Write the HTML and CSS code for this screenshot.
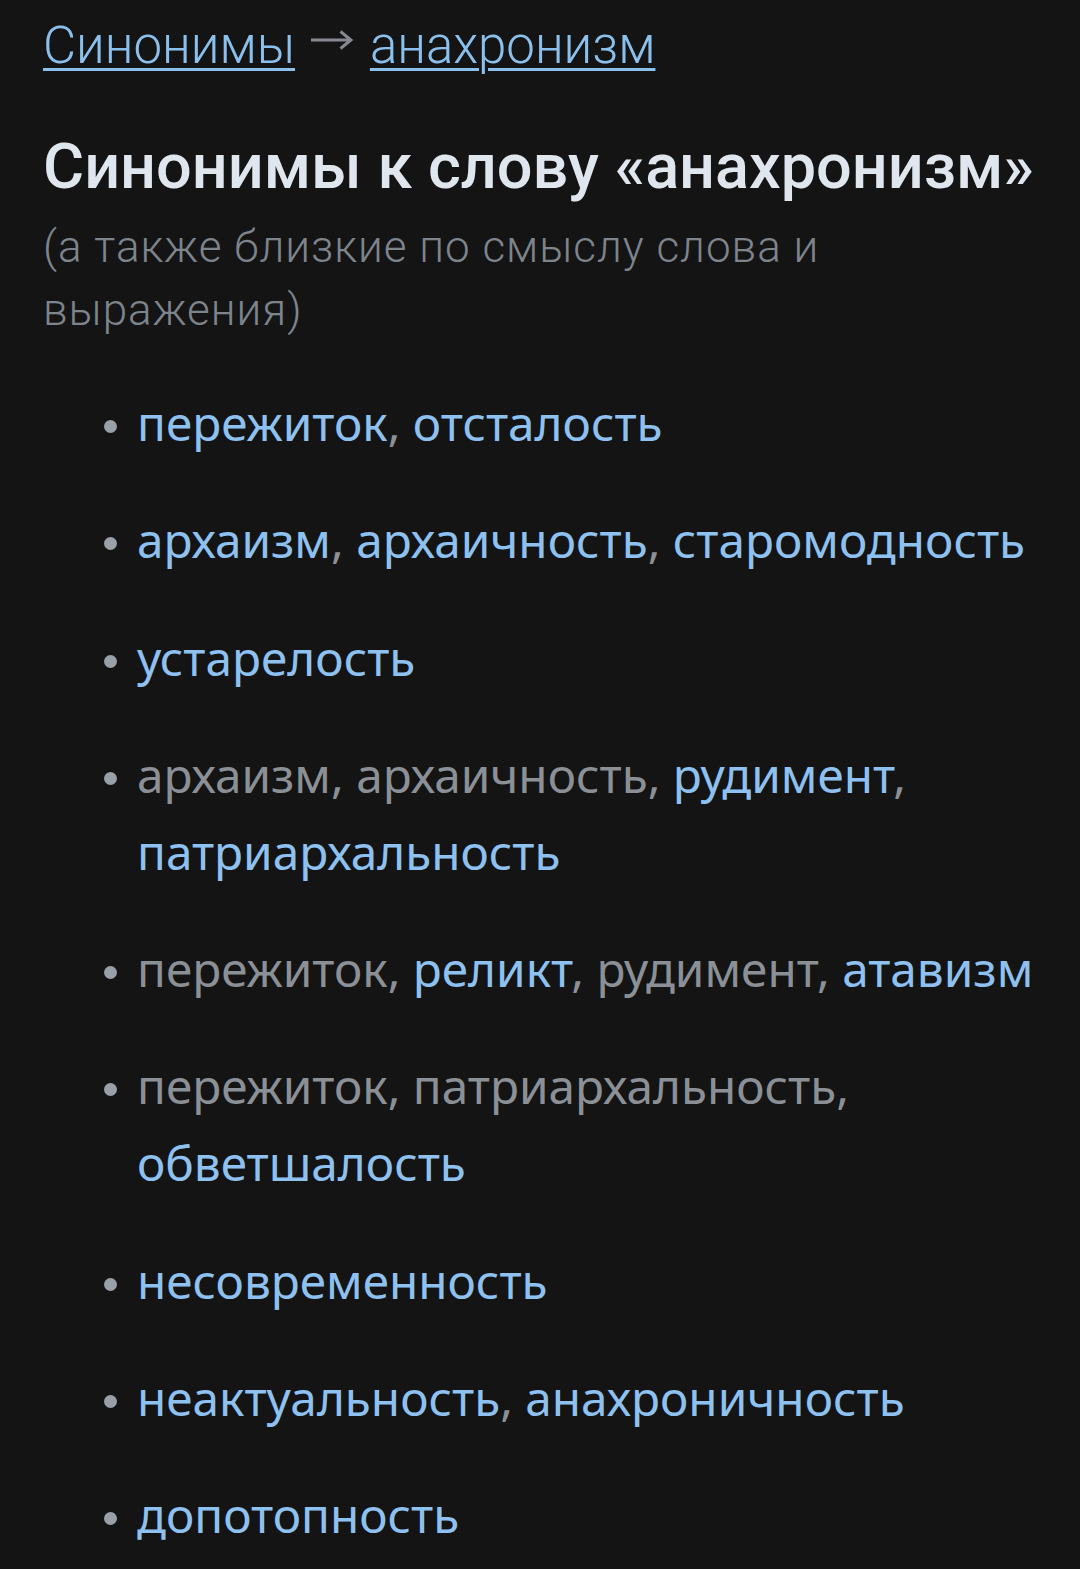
FILE: index.html
```html
<!DOCTYPE html>
<html lang="ru">
<head>
<meta charset="utf-8">
<title>Синонимы к слову «анахронизм»</title>
<link rel="stylesheet" href="styles.css">
</head>
<body>
<div class="page">
  <nav class="crumbs"><a href="#">Синонимы</a> <svg class="arrow" viewBox="0 0 42 20" width="42" height="20" aria-label="→"><path d="M0 10 H40 M29.5 1.5 L40 10 L29.5 18.5" fill="none" stroke="#868a90" stroke-width="3"/></svg> <a href="#">анахронизм</a></nav>
  <h1 class="title">Синонимы к слову «анахронизм»</h1>
  <p class="sub">(а также близкие по смыслу слова и выражения)</p>
  <ul class="syn">
    <li><a href="#">пережиток</a>, <a href="#">отсталость</a></li>
    <li><a href="#">архаизм</a>, <a href="#">архаичность</a>, <a href="#">старомодность</a></li>
    <li><a href="#">устарелость</a></li>
    <li>архаизм, архаичность, <a href="#">рудимент</a>, <a href="#">патриархальность</a></li>
    <li>пережиток, <a href="#">реликт</a>, рудимент, <a href="#">атавизм</a></li>
    <li>пережиток, патриархальность, <a href="#">обветшалость</a></li>
    <li><a href="#">несовременность</a></li>
    <li><a href="#">неактуальность</a>, <a href="#">анахроничность</a></li>
    <li><a href="#">допотопность</a></li>
  </ul>
</div>
</body>
</html>
```
FILE: styles.css
```css
html, body {
  margin: 0;
  padding: 0;
  background: #141414;
}
.page {
  padding: 0 43px;
}
.crumbs {
  font-family: Roboto, "Liberation Sans", sans-serif;
  font-weight: 300;
  font-size: 51px;
  line-height: 60px;
  padding-top: 16px;
  color: #8a8e94;
}
.crumbs a {
  color: #8cc0ec;
  text-decoration: underline;
  text-decoration-thickness: 3px;
  text-underline-offset: 5px;
}
.arrow {
  display: inline-block;
  margin: 0 4px;
  vertical-align: 13px;
}
.title {
  font-family: Roboto, "Liberation Sans", sans-serif;
  font-weight: 500;
  font-size: 63px;
  line-height: 74px;
  color: #dfe6ee;
  margin: 54px 0 0;
}
.sub {
  font-family: Roboto, "Liberation Sans", sans-serif;
  font-weight: 300;
  font-size: 44px;
  line-height: 63px;
  letter-spacing: 1px;
  color: #7d848c;
  margin: 12px 0 0;
}
.syn {
  list-style: none;
  margin: 42px 0 0;
  padding: 0 0 0 94px;
  font-family: "Noto Sans", "Open Sans", sans-serif;
  font-size: 47.7px;
  line-height: 77px;
  color: #8b9096;
}
.syn li {
  margin-bottom: 40.3px;
}
.syn li::before {
  content: "";
  display: inline-block;
  width: 13px;
  height: 13px;
  border-radius: 50%;
  background: #9aa0a8;
  margin-left: -33px;
  margin-right: 20px;
  vertical-align: 8px;
}
.syn a {
  color: #8ec1f0;
  text-decoration: none;
}
```
